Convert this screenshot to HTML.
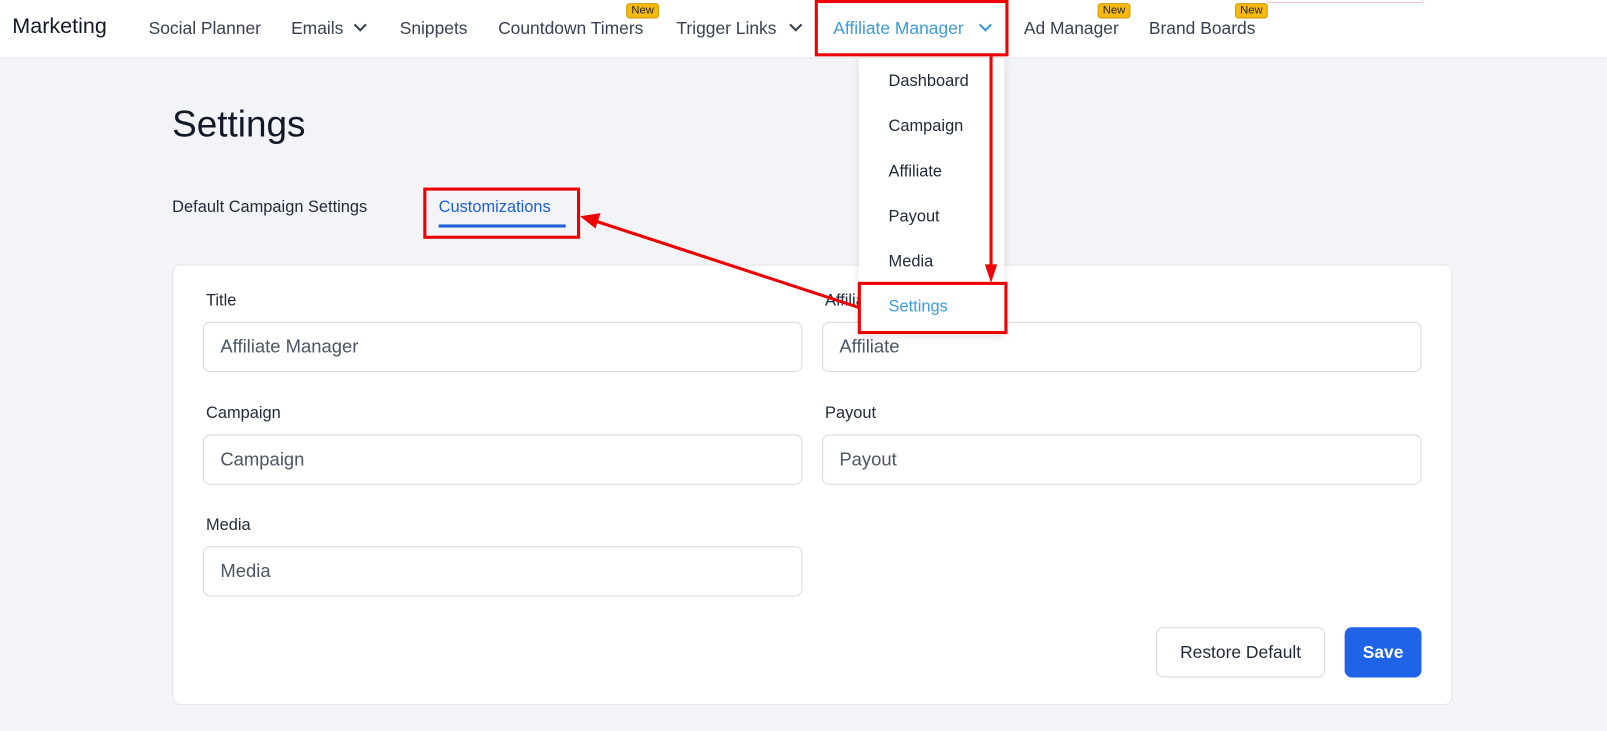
<!DOCTYPE html>
<html><head><style>
*{box-sizing:border-box;margin:0;padding:0}
html,body{width:1607px;height:731px;overflow:hidden;background:#f3f4f7}
#w{width:1568px;height:714px;position:relative;transform:scale(1.02487);transform-origin:0 0;font-family:"Liberation Sans",sans-serif;color:#1f2937}
.nav{position:absolute;left:0;top:0;width:1568px;height:57px;background:#fff;border-bottom:1px solid #e3e5ea}
.t{position:absolute;white-space:nowrap}
.ni{font-size:17px;color:#374151;top:18px}
.new{position:absolute;background:#f6b90d;border:1px solid #d19a00;border-radius:3px;font-size:11px;color:#222;padding:0 4px;height:15px;line-height:13px}
.chev{position:absolute;width:9px;height:9px;border-right:2px solid #374151;border-bottom:2px solid #374151;transform:rotate(45deg)}
.red{position:absolute;border:3px solid #e00}
.card{position:absolute;left:168px;top:258px;width:1249px;height:430px;background:#fff;border:1px solid #e3e5ea;border-radius:8px}
.lbl{font-size:16px;color:#1f2937}
.inp{position:absolute;width:585px;height:49px;border:1px solid #d6d9df;border-radius:7px;background:#fff;font-size:18px;color:#4b5563;padding:13px 16px}
.dd{position:absolute;left:838px;top:57px;width:142px;height:270px;background:#fff;box-shadow:0 2px 8px rgba(0,0,0,.12)}
.di{font-size:16px;color:#1f2937;left:867px}
</style></head><body><div id="w">
<div class="nav"></div>
<div class="t" style="left:12px;top:14px;font-size:21px;color:#111827">Marketing</div>
<div class="t ni" style="left:145px">Social Planner</div>
<div class="t ni" style="left:284px">Emails</div><div class="chev" style="left:347px;top:20px"></div>
<div class="t ni" style="left:390px">Snippets</div>
<div class="t ni" style="left:486px">Countdown Timers</div><div class="new" style="left:611px;top:3px">New</div>
<div class="t ni" style="left:660px">Trigger Links</div><div class="chev" style="left:772px;top:20px"></div>
<div class="t ni" style="left:813px;color:#3b9bd8">Affiliate Manager</div><div class="chev" style="left:957px;top:20px;border-color:#3b9bd8"></div>
<div class="t ni" style="left:999px">Ad Manager</div><div class="new" style="left:1071px;top:3px">New</div>
<div class="t ni" style="left:1121px">Brand Boards</div><div class="new" style="left:1205px;top:3px">New</div>
<div style="position:absolute;left:1235px;top:0;width:155px;height:3px;border:1px solid #f2caca;border-top:none;border-radius:0 0 4px 4px"></div>

<div class="t" style="left:168px;top:100px;font-size:36px;color:#111827">Settings</div>
<div class="t" style="left:168px;top:194px;font-size:16px;color:#1f2937">Default Campaign Settings</div>
<div class="t" style="left:428px;top:194px;font-size:16px;color:#1d5fd6">Customizations</div>
<div style="position:absolute;left:428px;top:219px;width:124px;height:3px;background:#1d5fd6"></div>
<div class="red" style="left:413px;top:183px;width:153px;height:50px"></div>

<div class="card"></div>
<div class="t lbl" style="left:201px;top:285px">Title</div>
<div class="inp" style="left:198px;top:314px">Affiliate Manager</div>
<div class="t lbl" style="left:805px;top:285px">Affiliate</div>
<div class="inp" style="left:802px;top:314px">Affiliate</div>
<div class="t lbl" style="left:201px;top:395px">Campaign</div>
<div class="inp" style="left:198px;top:424px">Campaign</div>
<div class="t lbl" style="left:805px;top:395px">Payout</div>
<div class="inp" style="left:802px;top:424px">Payout</div>
<div class="t lbl" style="left:201px;top:504px">Media</div>
<div class="inp" style="left:198px;top:533px">Media</div>
<div style="position:absolute;left:1128px;top:612px;width:165px;height:49px;border:1px solid #d6d9df;border-radius:7px;background:#fff;font-size:17px;text-align:center;line-height:47px;color:#1f2937">Restore Default</div>
<div style="position:absolute;left:1312px;top:612px;width:75px;height:49px;border-radius:7px;background:#1f63e8;font-size:17px;text-align:center;line-height:49px;color:#fff;font-weight:bold">Save</div>

<div class="dd"></div>
<div class="t di" style="top:71px">Dashboard</div>
<div class="t di" style="top:115px">Campaign</div>
<div class="t di" style="top:159px">Affiliate</div>
<div class="t di" style="top:203px">Payout</div>
<div class="t di" style="top:247px">Media</div>
<div class="t di" style="top:291px;color:#3b9bd8">Settings</div>

<div class="red" style="left:795px;top:0;width:189px;height:55px"></div>
<div class="red" style="left:837px;top:275px;width:146px;height:51px"></div>
<svg style="position:absolute;left:0;top:0" width="1568" height="714">
<line x1="967" y1="55" x2="967" y2="262" stroke="#e00" stroke-width="3"/>
<polygon points="961,258 973,258 967,276" fill="#e00"/>
<line x1="838" y1="300" x2="582" y2="216" stroke="#e00" stroke-width="3"/>
<polygon points="566,211 586,208 581,223" fill="#e00"/>
</svg>
</div></body></html>
